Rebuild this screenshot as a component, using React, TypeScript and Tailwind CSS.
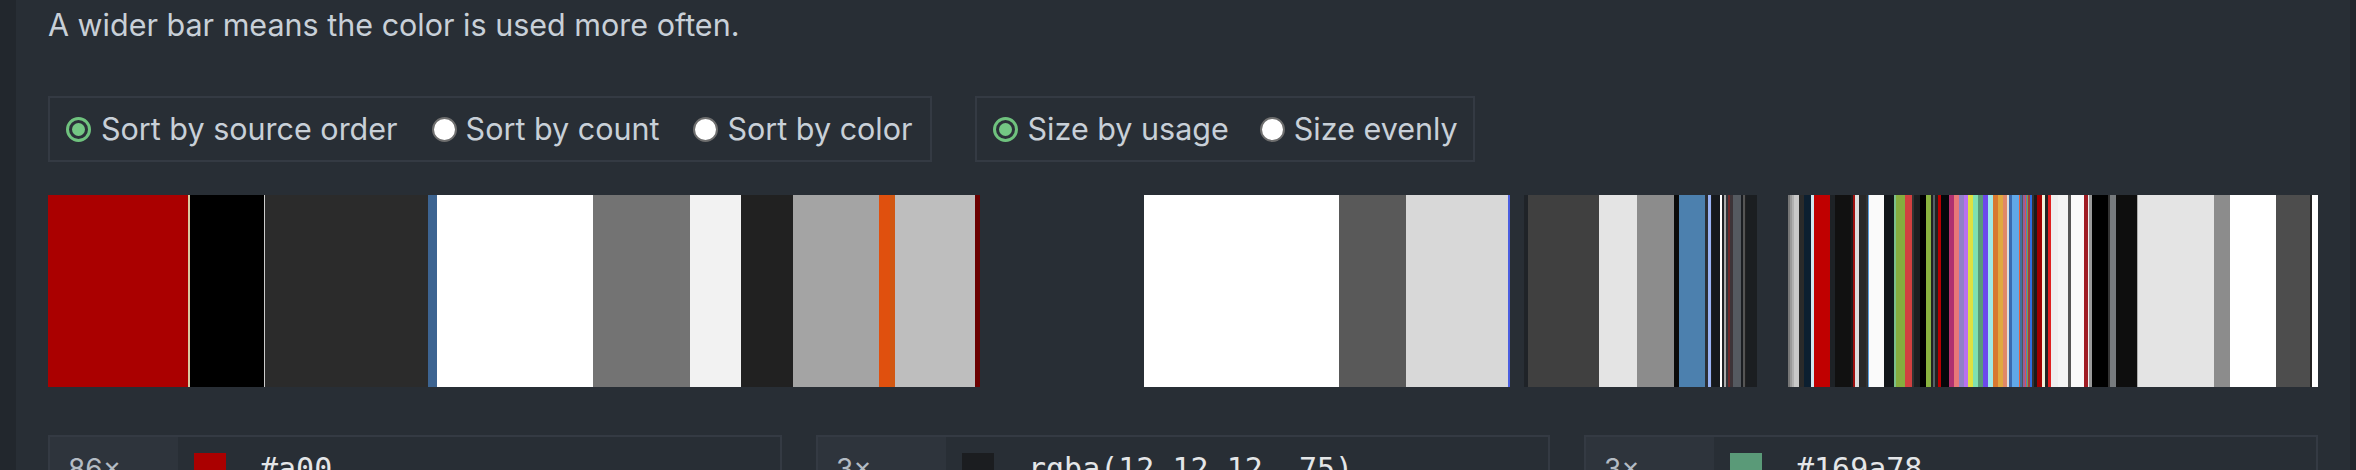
import React from "react";

// [end x, colour] — each segment runs from the previous end
const segments: [number, string][] = [
  [188, "#aa0000"], [189.5, "#d8c8a0"], [264, "#000000"], [265.3, "#cccccc"], [428, "#2b2b2b"],
  [437, "#3d6491"], [593, "#ffffff"], [690, "#737373"], [741, "#f2f2f2"], [793, "#212121"],
  [879, "#a4a4a4"], [890, "#e0500e"], [895, "#d25812"], [975, "#bebebe"], [980, "#6b0000"],
  [1144, "transparent"],
  [1339, "#ffffff"], [1406, "#595959"], [1508, "#d8d8d8"], [1510, "#4a5ee0"],
  [1524, "transparent"],
  [1528, "#1f2328"], [1599, "#404040"], [1637, "#e4e4e4"], [1674, "#8c8c8c"], [1679, "#0a0a0a"],
  [1705, "#4c80ae"], [1708, "#2a2f35"], [1711, "#9ab3f5"], [1712, "#1e2125"], [1720, "#16191d"],
  [1722, "#ffffff"], [1724, "#1e2125"], [1726, "#aaaaaa"], [1728, "#30343a"], [1730, "#6e2a2a"],
  [1733, "#3c3438"], [1741, "#555a60"], [1743, "#1a1d21"], [1745, "#555555"], [1746, "#222222"],
  [1757, "#1b1e21"],
  [1788, "transparent"],
  [1790, "#777777"], [1792, "#999999"], [1794, "#b0b0b0"], [1799, "#c8c8c8"], [1804, "#2a2a2a"],
  [1811, "#0c1f30"], [1814, "#d0e8f0"], [1830, "#c00000"], [1835, "#1e2226"], [1851, "#111111"],
  [1853, "#1a1a1a"], [1855, "#a01010"], [1859, "#dddddd"], [1866, "#282828"], [1868, "#333333"],
  [1869, "#5aa0e0"], [1884, "#fafafa"], [1894, "#12161a"], [1896, "#7cc08a"], [1905, "#86ad3e"],
  [1912, "#d24040"], [1914, "#333333"], [1920, "#1c1f21"], [1926, "#000000"], [1931, "#8ab440"],
  [1933, "#222222"], [1935, "#556066"], [1938, "#222222"], [1941, "#bb0000"], [1949, "#05070a"],
  [1954, "#b03070"], [1959, "#e87878"], [1964, "#9080c8"], [1968, "#b870f0"], [1973, "#e0e040"],
  [1978, "#80e0b0"], [1983, "#5a9a78"], [1988, "#6c48ec"], [1993, "#a0e8e8"], [1998, "#d87830"],
  [2003, "#e0a840"], [2007, "#e08868"], [2009, "#dddddd"], [2012, "#3a6ab0"], [2019, "#60a8e8"],
  [2020, "#e06040"], [2022, "#4070a0"], [2023, "#555555"], [2025, "#9060a0"], [2026, "#e05050"],
  [2027, "#5080c0"], [2028, "#80a040"], [2030, "#a04040"], [2032, "#3070e0"], [2034, "#333333"],
  [2037, "#1a1a1a"], [2042, "#a00000"], [2045, "#f0f0d8"], [2048, "#222222"], [2051, "#e02020"],
  [2058, "#eeeeee"], [2068, "#f4f4f4"], [2071, "#555555"], [2084, "#fafafa"], [2088, "#a01c24"],
  [2089, "#eeeeee"], [2092, "#999999"], [2108, "#000000"], [2110, "#333333"], [2116, "#777b7e"],
  [2137, "#0e0e0e"], [2138, "#aaaaaa"], [2214, "#e4e4e4"], [2230, "#8c8c8c"], [2276, "#ffffff"],
  [2310.5, "#4d4d4d"], [2311.7, "#222222"], [2318, "#ffffff"],
];

const cards = [
  { count: "86×", color: "#aa0000", label: "#a00" },
  { count: "3×", color: "#1b1d20", label: "rgba(12,12,12,.75)" },
  { count: "3×", color: "#5a9a78", label: "#169a78" },
];

function Radio({ checked, label }: { checked?: boolean; label: string }) {
  return (
    <label className="flex items-center">
      {checked ? (
        <span className="mr-[10px] flex h-[25px] w-[25px] items-center justify-center rounded-full border-[3px] border-[#6fc27e] bg-[#2b3139]">
          <span className="h-[13px] w-[13px] rounded-full bg-[#74c784]" />
        </span>
      ) : (
        <span className="mr-[9px] h-[25px] w-[25px] rounded-full border-2 border-[#6e6e6e] bg-white" />
      )}
      <span>{label}</span>
    </label>
  );
}

function Bar() {
  let prev = 48;
  return (
    <div className="flex h-[192px] w-full">
      {segments.map(([end, color], i) => {
        const w = end - prev;
        prev = end;
        return <div key={i} className="h-full shrink-0" style={{ width: w, backgroundColor: color }} />;
      })}
    </div>
  );
}

export default function App() {
  return (
    <div className="flex h-[470px] overflow-hidden bg-[#282e35] font-['Inter','Noto_Sans',sans-serif] text-[#c8d0d8]">
      <div className="w-[16px] shrink-0 bg-[#22272d]" />
      <main className="flex-1 px-[32px] pt-[2px]">
        <p className="text-[30.5px] leading-[45px]">A wider bar means the color is used more often.</p>

        <div className="mt-[49px] flex gap-[43px] text-[30.5px]">
          <div className="flex h-[66px] items-center gap-[34px] border-2 border-[#343a43] pl-[16px] pr-[17px]">
            <Radio checked label="Sort by source order" />
            <Radio label="Sort by count" />
            <Radio label="Sort by color" />
          </div>
          <div className="flex h-[66px] items-center gap-[31px] border-2 border-[#343a43] pl-[16px] pr-[15px]">
            <Radio checked label="Size by usage" />
            <Radio label="Size evenly" />
          </div>
        </div>

        <div className="mt-[33px]">
          <Bar />
        </div>

        <div className="mt-[48px] grid grid-cols-3 gap-[34px]">
          {cards.map((c, i) => (
            <div key={i} className="flex h-[80px] border-2 border-[#343a43]">
              <div className="w-[128px] shrink-0 bg-[#2e343c] pl-[18px] pt-[14px] text-[28px] leading-[36px] text-[#b4bcc4]">
                {c.count}
              </div>
              <div className="ml-[16px] mt-[16px] h-[32px] w-[32px] shrink-0" style={{ backgroundColor: c.color }} />
              <div className="ml-[34px] pt-[14px] font-['DejaVu_Sans_Mono',monospace] text-[30px] leading-[36px] text-[#e4e6e8]">
                {c.label}
              </div>
            </div>
          ))}
        </div>
      </main>
      <div className="w-[6px] shrink-0 bg-[#22272d]" />
    </div>
  );
}
